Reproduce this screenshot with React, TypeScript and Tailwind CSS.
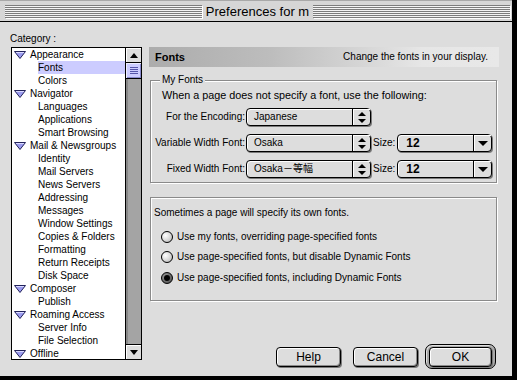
import React from "react";

type Row = { label: string; level: 0 | 1; selected?: boolean };

const rows: Row[] = [
  { label: "Appearance", level: 0 },
  { label: "Fonts", level: 1, selected: true },
  { label: "Colors", level: 1 },
  { label: "Navigator", level: 0 },
  { label: "Languages", level: 1 },
  { label: "Applications", level: 1 },
  { label: "Smart Browsing", level: 1 },
  { label: "Mail & Newsgroups", level: 0 },
  { label: "Identity", level: 1 },
  { label: "Mail Servers", level: 1 },
  { label: "News Servers", level: 1 },
  { label: "Addressing", level: 1 },
  { label: "Messages", level: 1 },
  { label: "Window Settings", level: 1 },
  { label: "Copies & Folders", level: 1 },
  { label: "Formatting", level: 1 },
  { label: "Return Receipts", level: 1 },
  { label: "Disk Space", level: 1 },
  { label: "Composer", level: 0 },
  { label: "Publish", level: 1 },
  { label: "Roaming Access", level: 0 },
  { label: "Server Info", level: 1 },
  { label: "File Selection", level: 1 },
  { label: "Offline", level: 0 },
];

function Disclosure() {
  return (
    <svg width="12" height="8" viewBox="0 0 12 8">
      <polygon points="0.5,0.5 11.5,0.5 6,7.5" fill="#9c9cf0" stroke="#22225a" strokeWidth="1" />
      <line x1="2" y1="1.5" x2="10" y2="1.5" stroke="#d8d8ff" strokeWidth="1" />
    </svg>
  );
}

function UpDown() {
  return (
    <svg width="8" height="11" viewBox="0 0 8 11">
      <polygon points="4,0 8,4 0,4" fill="#000" />
      <polygon points="0,7 8,7 4,11" fill="#000" />
    </svg>
  );
}

function DownTri() {
  return (
    <svg width="10" height="5" viewBox="0 0 10 5">
      <polygon points="0,0 10,0 5,5" fill="#000" />
    </svg>
  );
}

function Stripes() {
  return (
    <div className="flex-1 h-[13px] bg-[repeating-linear-gradient(to_bottom,#7c7c7c_0px,#7c7c7c_1px,#f4f4f4_1px,#f4f4f4_2px)] shadow-[1px_1px_0_#fff]" />
  );
}

function Popup({ width, text, kind }: { width: string; text: React.ReactNode; kind: "updown" | "down" }) {
  return (
    <div
      className={`flex h-[18px] ${width} rounded-[4px] border border-black bg-[#dddddd] shadow-[1px_1px_0_#7a7a7a,inset_1px_1px_0_#ffffff]`}
    >
      <div className="flex-1 flex items-center pl-[7px] text-[10px] leading-none whitespace-nowrap overflow-hidden">{text}</div>
      <div className="w-[18px] border-l border-black flex items-center justify-center shadow-[inset_1px_1px_0_#fff]">
        {kind === "updown" ? <UpDown /> : <DownTri />}
      </div>
    </div>
  );
}

function Radio({ on }: { on?: boolean }) {
  return (
    <div
      className={`w-[12px] h-[12px] rounded-full border border-black flex items-center justify-center ${
        on
          ? "bg-[radial-gradient(circle_at_35%_35%,#9a9a9a,#444444)]"
          : "bg-[radial-gradient(circle_at_35%_35%,#ffffff,#b4b4b4)]"
      }`}
    >
      {on && <div className="w-[6px] h-[6px] rounded-full bg-black" />}
    </div>
  );
}

function Button({ label, width }: { label: string; width: string }) {
  return (
    <div
      className={`${width} h-[20px] rounded-[4px] border border-black bg-[#dddddd] shadow-[inset_1px_1px_0_#ffffff,inset_-1px_-1px_0_#8a8a8a,1px_1px_0_#7a7a7a] flex items-center justify-center text-[12px] leading-none`}
    >
      {label}
    </div>
  );
}

export default function App() {
  return (
    <div className="w-[517px] h-[380px] bg-[#dddddd] border-r-[5px] border-b-[4px] border-black flex flex-col text-black [font-family:'Liberation_Sans',Arial,sans-serif] overflow-hidden">
      {/* Title bar */}
      <div className="h-[22px] border-b border-black border-t border-t-[#a8a8a8] bg-[#d6d6d6] flex items-center pl-[5px] pr-[2px] gap-[4px]">
        <Stripes />
        <div className="text-[13px] leading-none whitespace-nowrap">Preferences for m</div>
        <Stripes />
      </div>

      {/* Body */}
      <div className="flex-1 flex">
        {/* Left column */}
        <div className="pl-[11px] pt-[10px] flex flex-col w-[142px]">
          <div className="h-[13px] mb-[2px] text-[10px] leading-[13px] -ml-[1px]">Category :</div>
          <div className="w-[131px] h-[313px] border border-black flex">
            <div className="flex-1 bg-white overflow-hidden">
              {rows.map((r) =>
                r.level === 0 ? (
                  <div key={r.label} className="h-[13px] flex items-center pl-[2px] text-[10px] leading-none whitespace-nowrap">
                    <Disclosure />
                    <span className="ml-[4px]">{r.label}</span>
                  </div>
                ) : (
                  <div key={r.label} className="h-[13px] flex pl-[26px] text-[10px] leading-none whitespace-nowrap">
                    <div className={`flex-1 flex items-center ${r.selected ? "bg-[#ccccff]" : ""}`}>{r.label}</div>
                  </div>
                )
              )}
            </div>
            <div className="w-[16px] border-l border-black flex flex-col">
              <div className="h-[15px] border-b border-black bg-[#dddddd] shadow-[inset_1px_1px_0_#fff] flex items-center justify-center">
                <svg width="8" height="5" viewBox="0 0 8 5">
                  <polygon points="4,0 8,5 0,5" fill="#000" />
                </svg>
              </div>
              <div className="h-[16px] border-b border-black bg-[#ccccff] shadow-[inset_1px_1px_0_#eeeeff,inset_-1px_-1px_0_#8888cc] flex items-center justify-center">
                <svg width="8" height="8" viewBox="0 0 8 8">
                  <line x1="0" y1="0.5" x2="8" y2="0.5" stroke="#5555aa" />
                  <line x1="0" y1="2.5" x2="8" y2="2.5" stroke="#5555aa" />
                  <line x1="0" y1="4.5" x2="8" y2="4.5" stroke="#5555aa" />
                  <line x1="0" y1="6.5" x2="8" y2="6.5" stroke="#5555aa" />
                </svg>
              </div>
              <div className="flex-1 bg-[#a4a4a4] shadow-[inset_2px_0_0_#888888]" />
              <div className="h-[15px] border-t border-black bg-[#dddddd] shadow-[inset_1px_1px_0_#fff] flex items-center justify-center">
                <svg width="8" height="5" viewBox="0 0 8 5">
                  <polygon points="0,0 8,0 4,5" fill="#000" />
                </svg>
              </div>
            </div>
          </div>
        </div>

        {/* Right column */}
        <div className="ml-[7px] w-[350px] pt-[25px] flex flex-col">
          <div className="h-[20px] flex items-center justify-between pl-[6px] pr-[11px] bg-[linear-gradient(to_right,#acacac,#bdbdbd_35%,#e6e6e6_78%,#e8e8e8)]">
            <span className="text-[11px] font-bold leading-none">Fonts</span>
            <span className="text-[10px] leading-none">Change the fonts in your display.</span>
          </div>

          {/* My Fonts group */}
          <div className="relative mt-[13px] ml-[1px] w-[347px] h-[103px] border border-[#8a8a8a] shadow-[inset_1px_1px_0_#ffffff,1px_1px_0_#ffffff] flex flex-col">
            <div className="absolute -top-[7px] left-[9px] px-[2px] bg-[#dddddd] text-[10px] leading-[12px]">My Fonts</div>
            <div className="mt-[8px] h-[12px] pl-[11px] text-[10.8px] leading-[12px] whitespace-nowrap">
              When a page does not specify a font, use the following:
            </div>
            <div className="mt-[7px] flex items-center">
              <div className="w-[95px] text-right pr-[1px] text-[10px] leading-none">For the Encoding:</div>
              <Popup width="w-[125px]" text="Japanese" kind="updown" />
            </div>
            <div className="mt-[8px] flex items-center">
              <div className="w-[95px] text-right pr-[1px] text-[10px] leading-none whitespace-nowrap">Variable Width Font:</div>
              <Popup width="w-[125px]" text="Osaka" kind="updown" />
              <div className="ml-[2px] text-[10px] leading-none">Size:</div>
              <div className="ml-[2px]">
                <Popup width="w-[95px]" text={<span className="text-[12px] font-bold pl-[1px]">12</span>} kind="down" />
              </div>
            </div>
            <div className="mt-[8px] flex items-center">
              <div className="w-[95px] text-right pr-[1px] text-[10px] leading-none whitespace-nowrap">Fixed Width Font:</div>
              <Popup
                width="w-[125px]"
                text={<span className="[font-family:'Liberation_Sans','Noto_Sans_CJK_JP',sans-serif]">Osaka－等幅</span>}
                kind="updown"
              />
              <div className="ml-[2px] text-[10px] leading-none">Size:</div>
              <div className="ml-[2px]">
                <Popup width="w-[95px]" text={<span className="text-[12px] font-bold pl-[1px]">12</span>} kind="down" />
              </div>
            </div>
          </div>

          {/* Second group */}
          <div className="mt-[14px] ml-[1px] w-[347px] h-[104px] border border-[#8a8a8a] shadow-[inset_1px_1px_0_#ffffff,1px_1px_0_#ffffff] flex flex-col">
            <div className="mt-[9px] pl-[3px] h-[12px] text-[10px] leading-[12px]">Sometimes a page will specify its own fonts.</div>
            <div className="mt-[11px] pl-[10px] flex items-center gap-[4px] h-[14px] text-[10px] leading-none">
              <Radio />
              <span>Use my fonts, overriding page-specified fonts</span>
            </div>
            <div className="mt-[6px] pl-[10px] flex items-center gap-[4px] h-[14px] text-[10px] leading-none">
              <Radio />
              <span>Use page-specified fonts, but disable Dynamic Fonts</span>
            </div>
            <div className="mt-[7px] pl-[10px] flex items-center gap-[4px] h-[14px] text-[10px] leading-none">
              <Radio on />
              <span>Use page-specified fonts, including Dynamic Fonts</span>
            </div>
          </div>

          {/* Buttons */}
          <div className="mt-[43px] h-[25px] flex items-center justify-end pr-[3px]">
            <Button label="Help" width="w-[65px]" />
            <div className="ml-[12px]">
              <Button label="Cancel" width="w-[65px]" />
            </div>
            <div className="ml-[7px] w-[71px] h-[25px] rounded-[7px] border border-black bg-[#a8a8a8] shadow-[inset_1px_1px_0_#e0e0e0] flex items-center justify-center">
              <Button label="OK" width="w-[63px]" />
            </div>
          </div>
        </div>
      </div>
    </div>
  );
}
